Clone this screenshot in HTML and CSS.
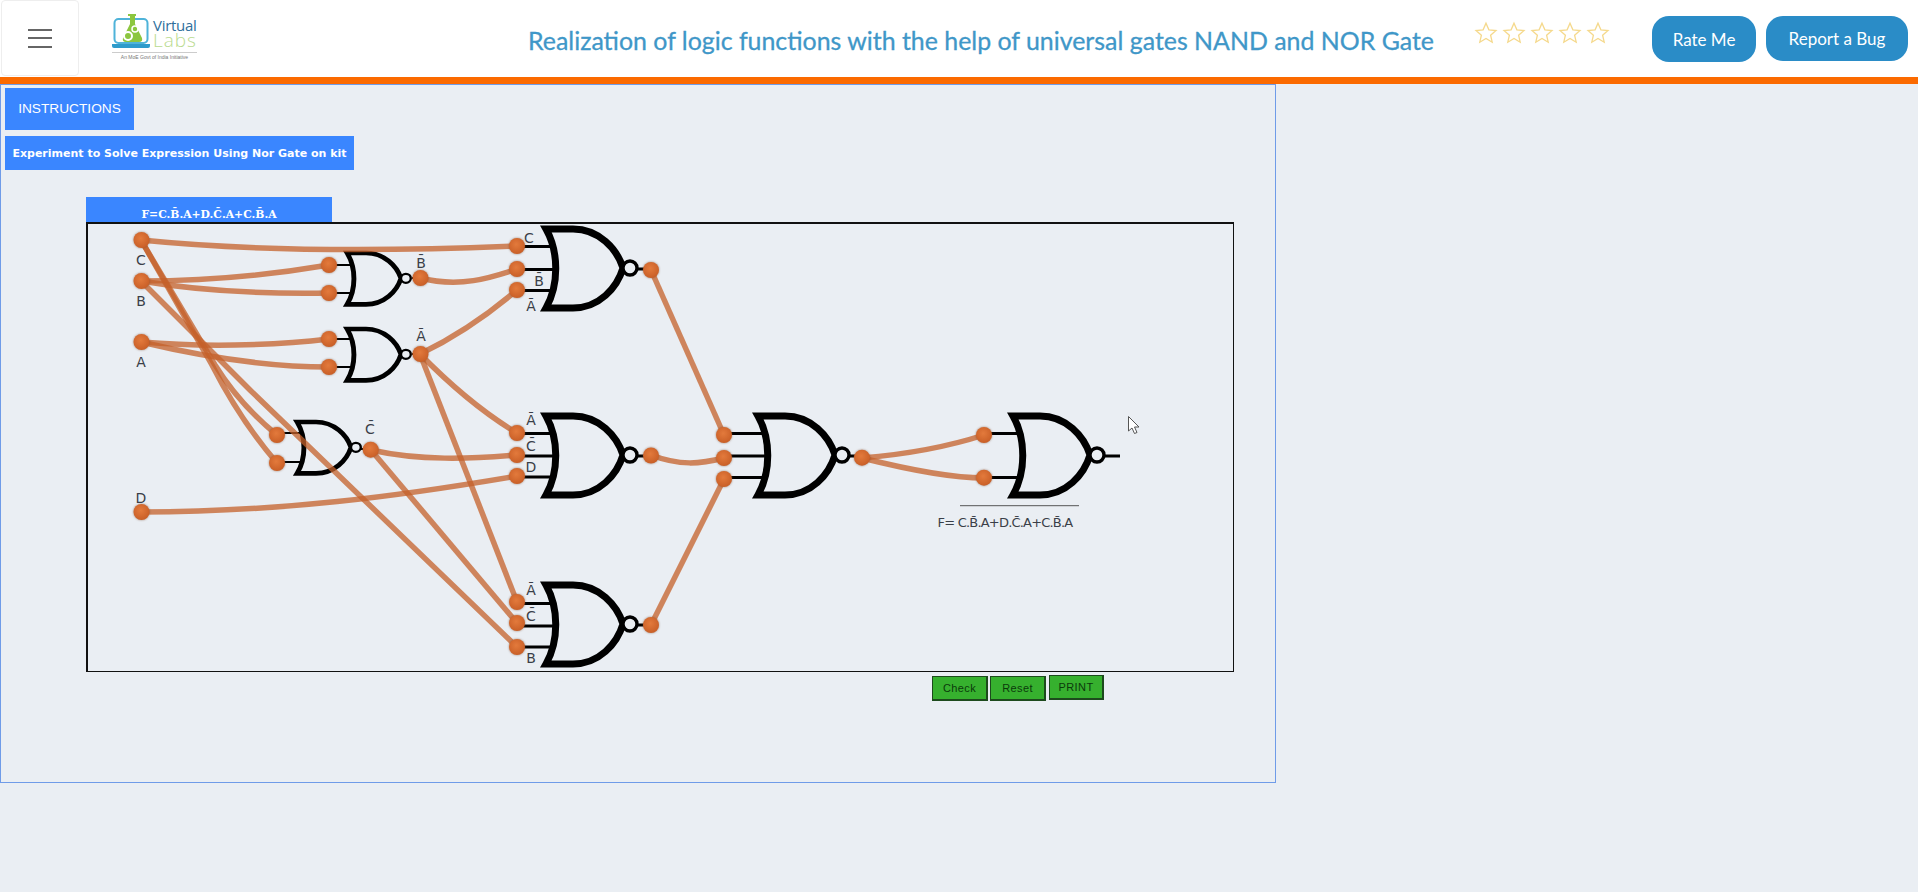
FILE: index.html
```html
<!DOCTYPE html>
<html lang="en">
<head>
    <meta charset="UTF-8">
    <title>Realization of logic functions</title>
    <link rel="stylesheet" href="styles.css">
</head>
<body>
    <!-- Top bar -->
    <header class="topbar">
        <button class="menu-btn" aria-label="Menu"><span></span><span></span><span></span></button>
        <div class="logo">
            <svg class="logo-mark" width="40" height="36" viewBox="0 0 40 36">
                <rect x="2.500" y="6" width="33" height="24" rx="4" fill="none" stroke="#4fb3d9" stroke-width="2"/>
                <path d="M16 1h8v2h-1v8l7 14q1 4-3 4H14q-4 0-3-4l7-14V3h-2z" fill="#8cc63f"/>
                <circle cx="16" cy="23" r="4" fill="none" stroke="#fff" stroke-width="2"/>
                <circle cx="23" cy="16" r="3" fill="none" stroke="#fff" stroke-width="1.500"/>
                <path d="M0 31h38v2q0 2-2 2H2q-2 0-2-2z" fill="#2e9bcb"/>
            </svg>
            <div class="logo-words">
                <span class="logo-virtual">Virtual</span>
                <span class="logo-labs">Labs</span>
            </div>
            <div class="logo-tag">An MoE Govt of India Initiative</div>
        </div>
        <h1 class="title">Realization of logic functions with the help of universal gates NAND and NOR Gate</h1>
        <div class="stars">
            <svg width="24" height="24" viewBox="0 0 24 24"><use href="#star"/></svg>
            <svg width="24" height="24" viewBox="0 0 24 24"><use href="#star"/></svg>
            <svg width="24" height="24" viewBox="0 0 24 24"><use href="#star"/></svg>
            <svg width="24" height="24" viewBox="0 0 24 24"><use href="#star"/></svg>
            <svg width="24" height="24" viewBox="0 0 24 24"><use href="#star"/></svg>
        </div>
        <a class="pill pill-rate">Rate Me</a>
        <a class="pill pill-bug">Report a Bug</a>
    </header>

    <!-- Experiment panel -->
    <main class="panel">
        <div class="tab-instructions">INSTRUCTIONS</div>
        <div class="tab-experiment">Experiment to Solve Expression Using Nor Gate on kit</div>
        <div class="tab-formula">F=C.B&#772;.A+D.C&#772;.A+C.B&#772;.A</div>

        <div class="board">
            <svg class="circuit" width="1145" height="446" viewBox="88 224 1145 446">
                <defs>
                    <path id="star" d="M12 2.200l2.900 6.600 7.100.7-5.400 4.700 1.600 7-6.200-3.700-6.200 3.700 1.600-7L2 9.500l7.100-.7z" fill="none" stroke="#f5d98c" stroke-width="1.300"/>
                    <radialGradient id="ball" cx="45%" cy="40%" r="60%">
                        <stop offset="0" stop-color="#e37a3c"/>
                        <stop offset="1" stop-color="#c95f27"/>
                    </radialGradient>
                    <g id="gate" fill="none" stroke="#000" stroke-width="7">
                        <path d="M3 0H30C56 0 74 20 80 39C74 59 56 79 30 79H3C16 56 16 23 3 0Z"/>
                        <circle cx="87" cy="39" r="7" fill="#eaeef3" stroke-width="3.400"/>
                    </g>
                </defs>

                <!-- gates -->
                <use href="#gate" transform="translate(345 253) scale(.7 .65)"/>
                <use href="#gate" transform="translate(345 329) scale(.7 .65)"/>
                <use href="#gate" transform="translate(295 422) scale(.7 .65)"/>
                <use href="#gate" transform="translate(543 229)"/>
                <use href="#gate" transform="translate(543 416)"/>
                <use href="#gate" transform="translate(543 585)"/>
                <use href="#gate" transform="translate(755 416)"/>
                <use href="#gate" transform="translate(1010 416)"/>

                <!-- input and output stubs -->
                <path class="stub" d="M517 246.500H552M517 269.500H554M517 290.500H552M638 269H651M517 433.500H552M517 456H554M517 477H552M638 456H651M517 603.500H552M517 626H554M517 647H552M638 625H651M724 433.500H764M724 456H766M724 477.500H764M850 456H862M984 433.500H1020M984 477.500H1020M1105 456H1120"/>
                <path class="stub-thin" d="M329 265H352M329 293H352M329 339H352M329 367H352M277 433H301M277 462H301M412 278H420M412 354H420M360 449H371"/>

                <!-- wires -->
                <g class="wires">
                    <path d="M141 240C260 252 400 251 517 246"/>
                    <path d="M141 281C200 281 270 275 329 265"/>
                    <path d="M141 281C200 291 270 294 329 293"/>
                    <path d="M141 342C200 347 270 346 329 339"/>
                    <path d="M141 342C200 356 270 367 329 367"/>
                    <path d="M141 240L215 365Q240 405 277 435"/>
                    <path d="M141 240L212 365Q240 420 277 463"/>
                    <path d="M141 281L250 390L517 647"/>
                    <path d="M420 278C460 288 490 278 517 269"/>
                    <path d="M420 354Q470 330 517 290"/>
                    <path d="M420 354Q470 405 517 433"/>
                    <path d="M420 354L517 602"/>
                    <path d="M371 450C420 461 470 459 517 455"/>
                    <path d="M371 450L517 623"/>
                    <path d="M141 512C280 512 400 496 517 476"/>
                    <path d="M651 270L724 435"/>
                    <path d="M651 455C680 466 700 464 724 458"/>
                    <path d="M651 625L724 479"/>
                    <path d="M862 458C910 454 950 446 984 435"/>
                    <path d="M862 458C910 470 950 478 984 478"/>
                </g>

                <!-- nodes -->
                <g class="nodes">
                    <circle cx="141.500" cy="240" r="8"/>
                    <circle cx="141.500" cy="281" r="8"/>
                    <circle cx="141.500" cy="342" r="8"/>
                    <circle cx="141.500" cy="512" r="8"/>
                    <circle cx="329" cy="265" r="8"/>
                    <circle cx="329" cy="293" r="8"/>
                    <circle cx="329" cy="339" r="8"/>
                    <circle cx="329" cy="367" r="8"/>
                    <circle cx="277" cy="435" r="8"/>
                    <circle cx="277" cy="463" r="8"/>
                    <circle cx="420.500" cy="278" r="8"/>
                    <circle cx="420.500" cy="354" r="8"/>
                    <circle cx="370.700" cy="449.700" r="8"/>
                    <circle cx="517" cy="246" r="8"/>
                    <circle cx="517" cy="269" r="8"/>
                    <circle cx="517" cy="290" r="8"/>
                    <circle cx="517" cy="433" r="8"/>
                    <circle cx="517" cy="455" r="8"/>
                    <circle cx="517" cy="476" r="8"/>
                    <circle cx="517" cy="602" r="8"/>
                    <circle cx="517" cy="623" r="8"/>
                    <circle cx="517" cy="647" r="8"/>
                    <circle cx="651" cy="270" r="8"/>
                    <circle cx="651" cy="455.500" r="8"/>
                    <circle cx="651" cy="625" r="8"/>
                    <circle cx="724" cy="435" r="8"/>
                    <circle cx="724" cy="458" r="8"/>
                    <circle cx="724" cy="479" r="8"/>
                    <circle cx="862" cy="457.700" r="8"/>
                    <circle cx="984" cy="435" r="8"/>
                    <circle cx="984" cy="477.700" r="8"/>
                </g>

                <!-- labels -->
                <g class="labels">
                    <text x="141" y="265">C</text>
                    <text x="141" y="306">B</text>
                    <text x="141" y="367">A</text>
                    <text x="141" y="503">D</text>
                    <text x="421" y="268">B&#772;</text>
                    <text x="421" y="341">A&#772;</text>
                    <text x="370" y="434">C&#772;</text>
                    <text x="529" y="243">C</text>
                    <text x="539" y="286">B&#772;</text>
                    <text x="531" y="311">A&#772;</text>
                    <text x="531" y="425">A&#772;</text>
                    <text x="531" y="451">C&#772;</text>
                    <text x="531" y="472">D</text>
                    <text x="531" y="595">A&#772;</text>
                    <text x="531" y="621">C&#772;</text>
                    <text x="531" y="663">B</text>
                    <text class="output-label" x="1005" y="527">F= C.B&#772;.A+D.C&#772;.A+C.B&#772;.A</text>
                </g>
                <path class="stub-line" d="M960 505.700H1079"/>

                <!-- mouse pointer -->
                <path class="pointer" d="M1128.500 416.500V431l3.500-3 2.500 5.500 2.500-1-2.500-5.500h4.500z"/>
            </svg>
        </div>

        <div class="controls">
            <button class="kit-btn">Check</button>
            <button class="kit-btn">Reset</button>
            <button class="kit-btn kit-print">PRINT</button>
        </div>
    </main>
</body>
</html>
```

FILE: styles.css
```css
html {
    background: #fff;
}

body {
    margin: 0 2px 0 0;
    min-height: 892px;
    background: #eaeef3;
    font-family: "Liberation Sans", Arial, sans-serif;
}

.topbar {
    display: flex;
    align-items: flex-start;
    height: 77px;
    background: #fff;
    border-bottom: 7px solid #fb6a00;
}

.menu-btn {
    display: flex;
    flex-direction: column;
    justify-content: center;
    align-items: center;
    gap: 6.500px;
    width: 78px;
    height: 76px;
    margin: 0 0 0 1px;
    padding: 0;
    background: #fff;
    border: 1px solid #eee;
    border-radius: 4px;
}

.menu-btn span {
    display: block;
    width: 24px;
    height: 2px;
    background: #666;
}

.logo {
    position: relative;
    width: 90px;
    height: 50px;
    margin: 13px 0 0 33px;
}

.logo-mark {
    position: absolute;
    left: 0;
    top: 0;
}

.logo-words {
    position: absolute;
    left: 41px;
    top: 4px;
    display: flex;
    flex-direction: column;
    font-family: "Open Sans", sans-serif;
}

.logo-virtual {
    font-size: 15px;
    line-height: 16px;
    letter-spacing: -0.3px;
    color: #2f6f9c;
}

.logo-labs {
    font-size: 19px;
    line-height: 15px;
    font-weight: 300;
    letter-spacing: 1px;
    color: #b9db8f;
}

.logo-tag {
    position: absolute;
    left: 0;
    top: 39px;
    width: 85px;
    border-top: 1px solid #ccc;
    font-size: 5px;
    line-height: 9px;
    text-align: center;
    color: #777;
}

.title {
    width: 907px;
    margin: 24px 0 0 326px;
    font-family: Lato, sans-serif;
    font-size: 24.900px;
    font-weight: 400;
    line-height: 32px;
    white-space: nowrap;
    color: #3f97c8;
    -webkit-text-stroke: 0.3px #3f97c8;
}

.stars {
    display: flex;
    gap: 4px;
    margin: 21px 0 0 39px;
}

.stars svg {
    display: block;
}

.pill {
    display: flex;
    align-items: center;
    justify-content: center;
    height: 46px;
    margin-top: 16px;
    border-radius: 17px;
    background: #2a8cc7;
    color: #fff;
    font-family: Lato, sans-serif;
    font-size: 17px;
}

.pill-rate {
    width: 104px;
    margin-left: 42px;
}

.pill-bug {
    width: 142px;
    height: 45px;
    margin-left: 10px;
}

.panel {
    box-sizing: border-box;
    width: 1276px;
    height: 699px;
    padding: 3px 0 0 4px;
    border: 1px solid #6f9be8;
}

.tab-instructions {
    width: 129px;
    height: 42px;
    line-height: 41px;
    text-align: center;
    font-size: 13.700px;
    color: #fff;
    background: #3a86ff;
}

.tab-experiment {
    width: 349px;
    height: 34px;
    margin-top: 6px;
    line-height: 36px;
    text-align: center;
    font-family: "DejaVu Sans", sans-serif;
    font-size: 11px;
    font-weight: bold;
    color: #fff;
    background: #3a86ff;
}

.tab-formula {
    width: 246px;
    height: 25px;
    margin: 27px 0 0 81px;
    padding-top: 12px;
    box-sizing: border-box;
    line-height: 12px;
    text-align: center;
    font-family: "DejaVu Serif", serif;
    font-size: 10.800px;
    font-weight: bold;
    color: #fff;
    background: #3a86ff;
}

.board {
    box-sizing: border-box;
    width: 1148px;
    height: 450px;
    margin-left: 81px;
    border: 2px solid #111;
    border-width: 2px 1.500px 1.500px 2px;
}

.circuit {
    display: block;
}

.stub {
    fill: none;
    stroke: #000;
    stroke-width: 3;
}

.stub-thin {
    fill: none;
    stroke: #000;
    stroke-width: 2;
}

.stub-line {
    fill: none;
    stroke: #555;
    stroke-width: 1;
}

.wires path {
    fill: none;
    stroke: #c4602a;
    stroke-width: 5.500;
    opacity: 0.75;
}

.nodes circle {
    fill: url(#ball);
    filter: drop-shadow(0 0 1px rgba(120, 70, 40, 0.6));
}

.labels text {
    font-family: "DejaVu Sans", sans-serif;
    font-size: 14px;
    text-anchor: middle;
    fill: #3a3f48;
}

.labels .output-label {
    font-size: 13px;
    letter-spacing: -0.8px;
}

.pointer {
    fill: #fff;
    stroke: #555;
    stroke-width: 1;
}

.controls {
    display: flex;
    align-items: flex-start;
    gap: 2px;
    margin: 4px 0 0 927px;
}

.kit-btn {
    box-sizing: border-box;
    width: 56px;
    height: 25px;
    padding: 0;
    font-family: "Liberation Sans", Arial, sans-serif;
    font-size: 11px;
    letter-spacing: 0.4px;
    color: #0b3a0b;
    background: #36b02e;
    border: 1px solid #1d4a1d;
    border-bottom-width: 2px;
    border-right-width: 2px;
}

.kit-print {
    width: 55px;
    margin: -1px 0 0 1px;
}
```
